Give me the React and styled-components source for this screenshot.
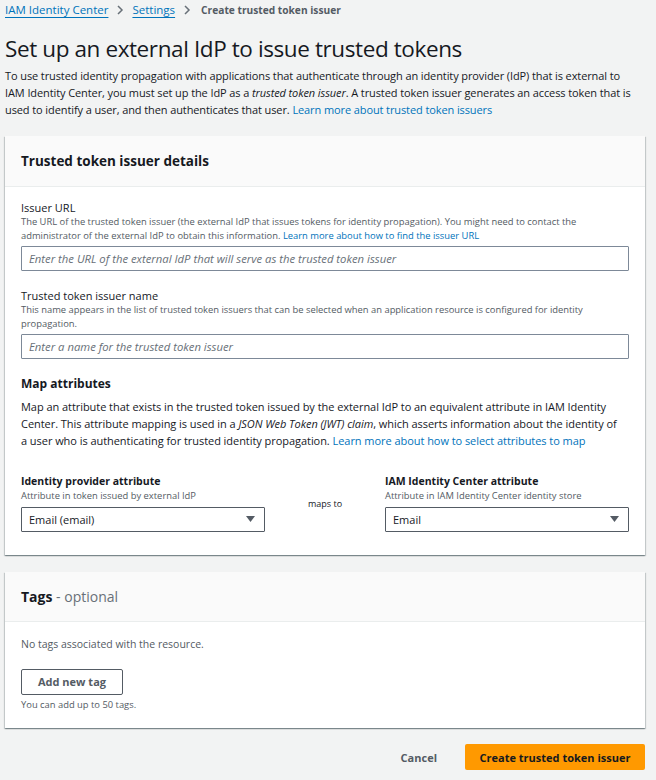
import React from 'react';
import styled, { createGlobalStyle } from 'styled-components';

const GlobalStyle = createGlobalStyle`
	html, body {
		margin: 0;
		padding: 0;
		background: #f2f3f3;
	}
	body {
		font-family: 'Open Sans', 'Noto Sans', sans-serif;
		color: #16191f;
	}
`;

const Page = styled.div`
	width: 656px;
	height: 780px;
	padding: 0 11px 0 5px;
	box-sizing: border-box;
	overflow: hidden;
`;

const Breadcrumbs = styled.nav`
	display: flex;
	align-items: center;
	gap: 6px;
	height: 19px;
	font-size: 11.5px;
`;

const Crumb = styled.a`
	color: #0073bb;
	text-decoration: underline;
	text-underline-offset: 3px;
`;

const Current = styled.span`
	color: #545b64;
	font-weight: 700;
	font-size: 10.2px;
	margin-left: 2px;
`;

const Chevron = () => (
	<svg width="12" height="12" viewBox="0 0 12 12">
		<path d="M4 2l4 4-4 4" fill="none" stroke="#687078" strokeWidth="1.5" />
	</svg>
);

const Title = styled.h1`
	font-size: 22.5px;
	font-weight: 400;
	margin: 15px 0 3px;
	line-height: 30px;
	letter-spacing: -0.4px;
`;

const Lead = styled.p`
	font-size: 11px;
	line-height: 17px;
	margin: 0 0 18px;
	letter-spacing: -0.1px;
	white-space: nowrap;
`;

const Link = styled.a`
	color: #0073bb;
	text-decoration: none;
`;

const Container = styled.section`
	background: #fff;
	box-shadow: 0 1px 1px 0 rgba(0, 28, 36, 0.3), 1px 1px 1px 0 rgba(0, 28, 36, 0.15), -1px 1px 1px 0 rgba(0, 28, 36, 0.15);
	margin-bottom: ${p => p.gap || 0}px;
`;

const Header = styled.header`
	background: #fafafa;
	border-bottom: 1px solid #eaeded;
	height: ${p => p.h}px;
	box-sizing: border-box;
	display: flex;
	align-items: center;
	padding: 0 16px;
`;

const HeaderTitle = styled.h2`
	font-size: ${p => p.size || 13.5}px;
	font-weight: 700;
	margin: 0;
`;

const Optional = styled.span`
	font-weight: 400;
	color: #687078;
`;

const Body = styled.div`
	padding: ${p => p.pad};
`;

const Field = styled.div`
	margin-bottom: ${p => p.mb || 0}px;
`;

const Label = styled.div`
	font-size: ${p => (p.bold ? '10.5px' : '11px')};
	font-weight: ${p => (p.bold ? 700 : 400)};
	line-height: 15px;
`;

const Hint = styled.div`
	font-size: 9.4px;
	line-height: 13.5px;
	color: #545b64;
	margin-bottom: ${p => (p.last ? 0 : 4)}px;
	white-space: nowrap;
`;

const Input = styled.div`
	height: 25px;
	border: 1px solid #7d8998;
	border-radius: 1px;
	box-sizing: border-box;
	display: flex;
	align-items: center;
	padding: 0 7px;
	font-size: 11.3px;
	font-style: italic;
	color: #687078;
`;

const SectionTitle = styled.h3`
	font-size: 12px;
	font-weight: 700;
	margin: 0 0 5px;
	line-height: 18px;
`;

const Para = styled.p`
	font-size: 11px;
	line-height: 17px;
	margin: 0 0 25px;
	letter-spacing: -0.05px;
	white-space: nowrap;
`;

const MapRow = styled.div`
	display: grid;
	grid-template-columns: 244px 1fr 244px;
	align-items: center;
`;

const MapsTo = styled.div`
	font-size: 9px;
	text-align: center;
	color: #16191f;
	padding-top: 1px;
`;

const Select = styled.div`
	height: 25px;
	border: 1px solid #545b64;
	border-radius: 1px;
	box-sizing: border-box;
	display: flex;
	align-items: center;
	justify-content: space-between;
	padding: 0 9px 0 7px;
	font-size: 11px;
`;

const Caret = () => (
	<svg width="9" height="7" viewBox="0 0 9 7">
		<path d="M0 0h9L4.5 6z" fill="#545b64" />
	</svg>
);

const Muted = styled.div`
	font-size: 10.5px;
	color: #545b64;
	margin-bottom: 18px;
`;

const SecondaryButton = styled.button`
	display: block;
	font-family: inherit;
	height: 26px;
	padding: 0 16px;
	border: 1px solid #545b64;
	background: #fff;
	border-radius: 2px;
	font-size: 11px;
	font-weight: 700;
	color: #545b64;
	margin-bottom: 3px;
`;

const Footer = styled.div`
	display: flex;
	justify-content: flex-end;
	align-items: center;
	gap: 22px;
	padding-top: 16px;
`;

const TextButton = styled.button`
	font-family: inherit;
	border: none;
	background: none;
	font-size: 11px;
	font-weight: 700;
	color: #545b64;
`;

const PrimaryButton = styled.button`
	font-family: inherit;
	height: 26px;
	width: 180px;
	border: none;
	background: #ff9900;
	border-radius: 2px;
	font-size: 11px;
	font-weight: 700;
	color: #16191f;
`;

const App = () => (
	<>
		<GlobalStyle />
		<Page>
			<Breadcrumbs>
				<Crumb>IAM Identity Center</Crumb>
				<Chevron />
				<Crumb>Settings</Crumb>
				<Chevron />
				<Current>Create trusted token issuer</Current>
			</Breadcrumbs>

			<Title>Set up an external IdP to issue trusted tokens</Title>
			<Lead>
				To use trusted identity propagation with applications that authenticate through an identity provider (IdP)
				that is external to
				<br />
				IAM Identity Center, you must set up the IdP as a <i>trusted token issuer</i>. A trusted token issuer
				generates an access token that is
				<br />
				used to identify a user, and then authenticates that user.{' '}
				<Link>Learn more about trusted token issuers</Link>
			</Lead>

			<Container gap={17}>
				<Header h={51}>
					<HeaderTitle>Trusted token issuer details</HeaderTitle>
				</Header>
				<Body pad="13px 16px 23px">
					<Field mb={17}>
						<Label>Issuer URL</Label>
						<Hint>
							The URL of the trusted token issuer (the external IdP that issues tokens for identity propagation). You
							might need to contact the
							<br />
							administrator of the external IdP to obtain this information.{' '}
							<Link>Learn more about how to find the issuer URL</Link>
						</Hint>
						<Input>Enter the URL of the external IdP that will serve as the trusted token issuer</Input>
					</Field>
					<Field mb={16}>
						<Label>Trusted token issuer name</Label>
						<Hint>
							This name appears in the list of trusted token issuers that can be selected when an application
							resource is configured for identity
							<br />
							propagation.
						</Hint>
						<Input>Enter a name for the trusted token issuer</Input>
					</Field>
					<SectionTitle>Map attributes</SectionTitle>
					<Para>
						Map an attribute that exists in the trusted token issued by the external IdP to an equivalent attribute
						in IAM Identity
						<br />
						Center. This attribute mapping is used in a <i>JSON Web Token (JWT) claim</i>, which asserts information
						about the identity of
						<br />
						a user who is authenticating for trusted identity propagation.{' '}
						<Link>Learn more about how to select attributes to map</Link>
					</Para>
					<MapRow>
						<div>
							<Label bold>Identity provider attribute</Label>
							<Hint>Attribute in token issued by external IdP</Hint>
							<Select>
								Email (email)
								<Caret />
							</Select>
						</div>
						<MapsTo>maps to</MapsTo>
						<div>
							<Label bold>IAM Identity Center attribute</Label>
							<Hint>Attribute in IAM Identity Center identity store</Hint>
							<Select>
								Email
								<Caret />
							</Select>
						</div>
					</MapRow>
				</Body>
			</Container>

			<Container>
				<Header h={50}>
					<HeaderTitle size={14}>
						Tags <Optional>- optional</Optional>
					</HeaderTitle>
				</Header>
				<Body pad="15px 16px 17px">
					<Muted>No tags associated with the resource.</Muted>
					<SecondaryButton>Add new tag</SecondaryButton>
					<Hint last>You can add up to 50 tags.</Hint>
				</Body>
			</Container>

			<Footer>
				<TextButton>Cancel</TextButton>
				<PrimaryButton>Create trusted token issuer</PrimaryButton>
			</Footer>
		</Page>
	</>
);

export default App;
